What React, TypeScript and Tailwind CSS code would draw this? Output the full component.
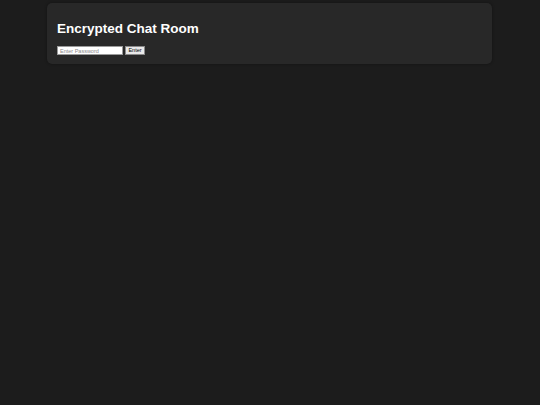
export default function App() {
  return (
    <div className="min-h-[405px] w-full bg-[#1c1c1c] pt-[3px]" style={{ fontFamily: '"Liberation Sans", Arial, sans-serif' }}>
      <div className="ml-[47px] w-[445px] rounded-[5px] bg-[#282828] pl-[10px] pr-[10px] pt-[18px] pb-[9px] shadow-[0_0_3px_rgba(0,0,0,0.4)]">
        <h1 className="m-0 text-[13.5px] font-bold leading-[16px] text-white">Encrypted Chat Room</h1>
        <div className="mt-[9px] flex items-center gap-[2px]">
          <input
            placeholder="Enter Password"
            className="h-[9px] w-[66px] border border-[#9a9a9a] bg-white px-[2px] text-[5.5px] leading-[7px] text-black outline-none placeholder:text-[#8a8a8a]"
          />
          <button className="h-[9px] w-[20px] border border-[#8a8a8a] bg-[#e9e9e9] text-[5.5px] leading-[7px] text-black">Enter</button>
        </div>
      </div>
    </div>
  );
}
